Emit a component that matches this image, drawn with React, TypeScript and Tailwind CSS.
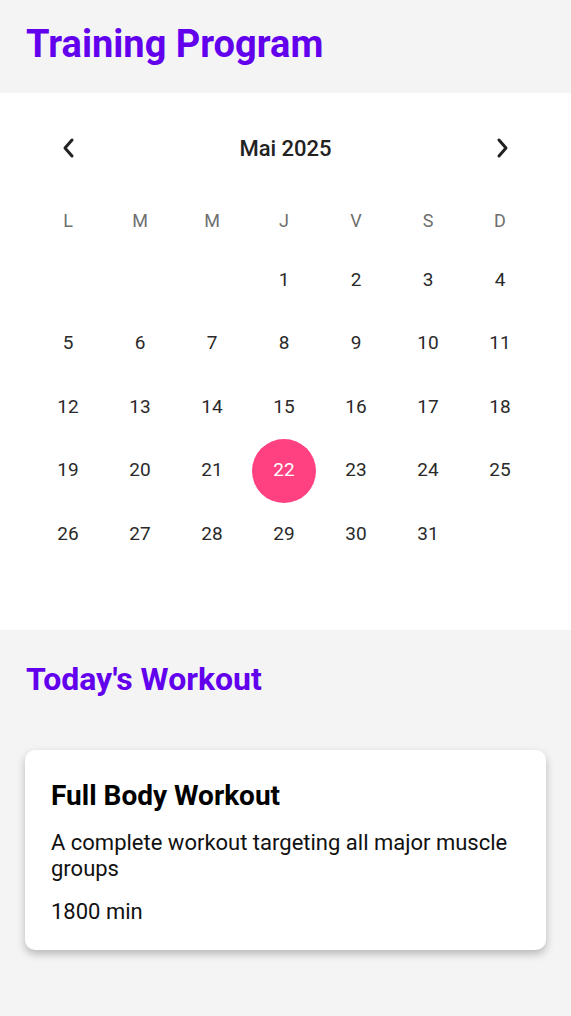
import React from "react";

const weeks: (number | null)[][] = [
  [null, null, null, 1, 2, 3, 4],
  [5, 6, 7, 8, 9, 10, 11],
  [12, 13, 14, 15, 16, 17, 18],
  [19, 20, 21, 22, 23, 24, 25],
  [26, 27, 28, 29, 30, 31, null],
];

const dayNames = ["L", "M", "M", "J", "V", "S", "D"];

export default function App() {
  return (
    <div className="min-h-[1016px] w-[571px] bg-[#f4f4f4]" style={{ fontFamily: "Roboto, 'Noto Sans', sans-serif" }}>
      <div className="h-[93px] px-[26px] flex items-center">
        <h1 className="text-[38px] font-bold text-[#6200ee] leading-none -mt-[6px]">Training Program</h1>
      </div>
      <div className="bg-white h-[537px] px-[32px] pt-[32px]">
        <div className="flex items-center justify-between h-[46px]">
          <div className="w-[72px] flex justify-center">
            <svg width="16" height="22" viewBox="0 0 16 22" fill="none">
              <path d="M12 3 L5 11 L12 19" stroke="#222" strokeWidth="3" strokeLinecap="round" strokeLinejoin="round" />
            </svg>
          </div>
          <div className="text-[22px] font-medium text-[#222]">Mai 2025</div>
          <div className="w-[72px] flex justify-center">
            <svg width="16" height="22" viewBox="0 0 16 22" fill="none">
              <path d="M4 3 L11 11 L4 19" stroke="#222" strokeWidth="3" strokeLinecap="round" strokeLinejoin="round" />
            </svg>
          </div>
        </div>
        <div className="grid grid-cols-[repeat(7,72px)] mt-[24px] h-[50px] items-center">
          {dayNames.map((d, i) => (
            <div key={i} className="text-center text-[18px] text-[#6f6f6f]">{d}</div>
          ))}
        </div>
        <div className="mt-[3px]">
          {weeks.map((w, wi) => (
            <div key={wi} className="grid grid-cols-[repeat(7,72px)] h-[63.5px] items-center">
              {w.map((d, di) => (
                <div key={di} className="flex justify-center items-center">
                  {d === 22 ? (
                    <div className="w-[64px] h-[64px] rounded-full bg-[#ff4081] flex items-center justify-center text-white text-[19px]">22</div>
                  ) : (
                    <span className="text-[19px] text-[#2a2a2a]">{d ?? ""}</span>
                  )}
                </div>
              ))}
            </div>
          ))}
        </div>
      </div>
      <div className="px-[25px] pt-[33px] pb-[60px]">
        <h2 className="text-[32px] font-bold text-[#6200ee] leading-none ml-[1px]">Today's Workout</h2>
        <div className="mt-[55px] bg-white rounded-[10px] shadow-[0_4px_8px_rgba(0,0,0,0.25)] px-[26px] pt-[29px] pb-[25px]">
          <h3 className="text-[28px] font-bold text-black leading-[34px]">Full Body Workout</h3>
          <p className="mt-[17px] text-[22px] text-[#111] leading-[26px]">A complete workout targeting all major muscle groups</p>
          <p className="mt-[17px] text-[22px] text-[#111] leading-[26px]">1800 min</p>
        </div>
      </div>
    </div>
  );
}
